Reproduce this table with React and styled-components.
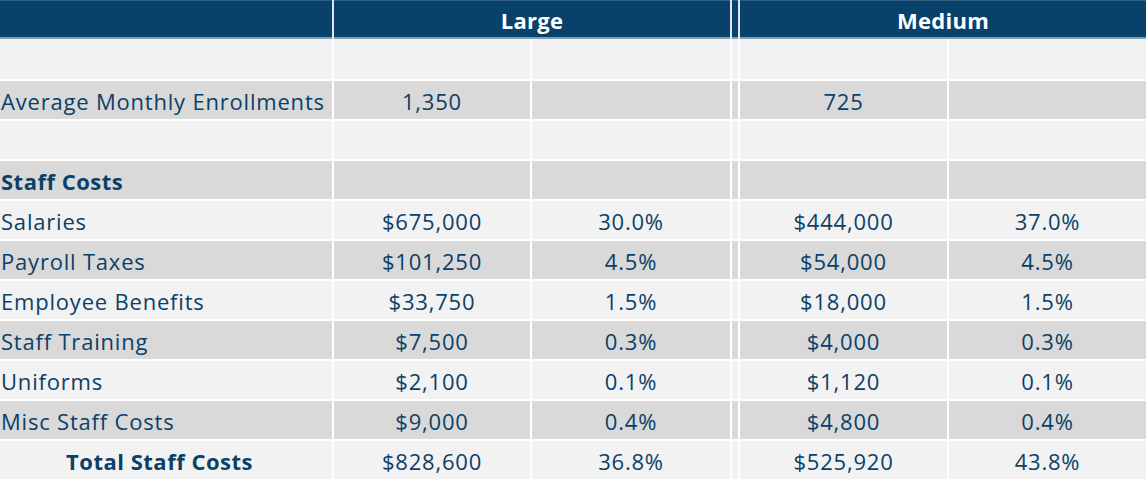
import React from "react";
import styled, { createGlobalStyle } from "styled-components";

const Global = createGlobalStyle`
  html, body { margin: 0; padding: 0; background: #ffffff; }
  body { font-family: "Open Sans", "Lato", sans-serif; }
`;

const COLS = "332px 196px 198px 6px 207px 1fr";

const Table = styled.div`
  width: 1146px;
  background: #ffffff;
  display: flex;
  flex-direction: column;
  gap: 2px;
`;

const HeaderRow = styled.div`
  display: grid;
  grid-template-columns: 332px 396px 6px 1fr;
  column-gap: 2px;
  height: 39px;
  background: #dfe7ee;
`;

const HeaderCell = styled.div`
  background: #08426b;
  border-top: 1px solid #2f5f83;
  border-bottom: 2px solid #7f9fb7;
  color: #ffffff;
  font-weight: 700;
  font-size: 22px;
  letter-spacing: 0.3px;
  display: flex;
  align-items: center;
  justify-content: center;
  padding-top: 2px;
  box-sizing: border-box;
`;

const Row = styled.div`
  display: grid;
  grid-template-columns: ${COLS};
  column-gap: 2px;
  height: ${(p) => p.$h || 38}px;
  margin-top: ${(p) => (p.$first ? -2 : 0)}px;
`;

const Cell = styled.div`
  background: ${(p) => (p.$shade ? "#d9d9d9" : "#f2f2f2")};
  color: #0b4068;
  font-size: 22px;
  letter-spacing: ${(p) => (p.$bold ? "0.5px" : "0.8px")};
  font-weight: ${(p) => (p.$bold ? 700 : 400)};
  display: flex;
  align-items: center;
  justify-content: ${(p) => (p.$left ? "flex-start" : "center")};
  padding-left: ${(p) => (p.$left ? "1px" : "0")};
  padding-right: ${(p) => (p.$total ? "13px" : "0")};
  padding-top: 2px;
  box-sizing: border-box;
  white-space: nowrap;
  overflow: hidden;
`;

const rows = [
  { label: "", vals: ["", "", "", ""] },
  { label: "Average Monthly Enrollments", vals: ["1,350", "", "725", ""] },
  { label: "", vals: ["", "", "", ""] },
  { label: "Staff Costs", bold: true, vals: ["", "", "", ""] },
  { label: "Salaries", vals: ["$675,000", "30.0%", "$444,000", "37.0%"] },
  { label: "Payroll Taxes", vals: ["$101,250", "4.5%", "$54,000", "4.5%"] },
  { label: "Employee Benefits", vals: ["$33,750", "1.5%", "$18,000", "1.5%"] },
  { label: "Staff Training", vals: ["$7,500", "0.3%", "$4,000", "0.3%"] },
  { label: "Uniforms", vals: ["$2,100", "0.1%", "$1,120", "0.1%"] },
  { label: "Misc Staff Costs", vals: ["$9,000", "0.4%", "$4,800", "0.4%"] },
  { label: "Total Staff Costs", total: true, vals: ["$828,600", "36.8%", "$525,920", "43.8%"] },
];

export default function App() {
  return (
    <>
      <Global />
      <Table>
        <HeaderRow>
          <HeaderCell />
          <HeaderCell>Large</HeaderCell>
          <HeaderCell />
          <HeaderCell>Medium</HeaderCell>
        </HeaderRow>
        {rows.map((r, i) => {
          const shade = i % 2 === 1;
          return (
            <Row key={i} $first={i === 0} $h={i === 0 ? 40 : 38}>
              <Cell
                $shade={shade}
                $left={!r.total}
                $total={r.total}
                $bold={r.bold || r.total}
              >
                {r.label}
              </Cell>
              <Cell $shade={shade}>{r.vals[0]}</Cell>
              <Cell $shade={shade}>{r.vals[1]}</Cell>
              <Cell $shade={shade} />
              <Cell $shade={shade}>{r.vals[2]}</Cell>
              <Cell $shade={shade}>{r.vals[3]}</Cell>
            </Row>
          );
        })}
      </Table>
    </>
  );
}
